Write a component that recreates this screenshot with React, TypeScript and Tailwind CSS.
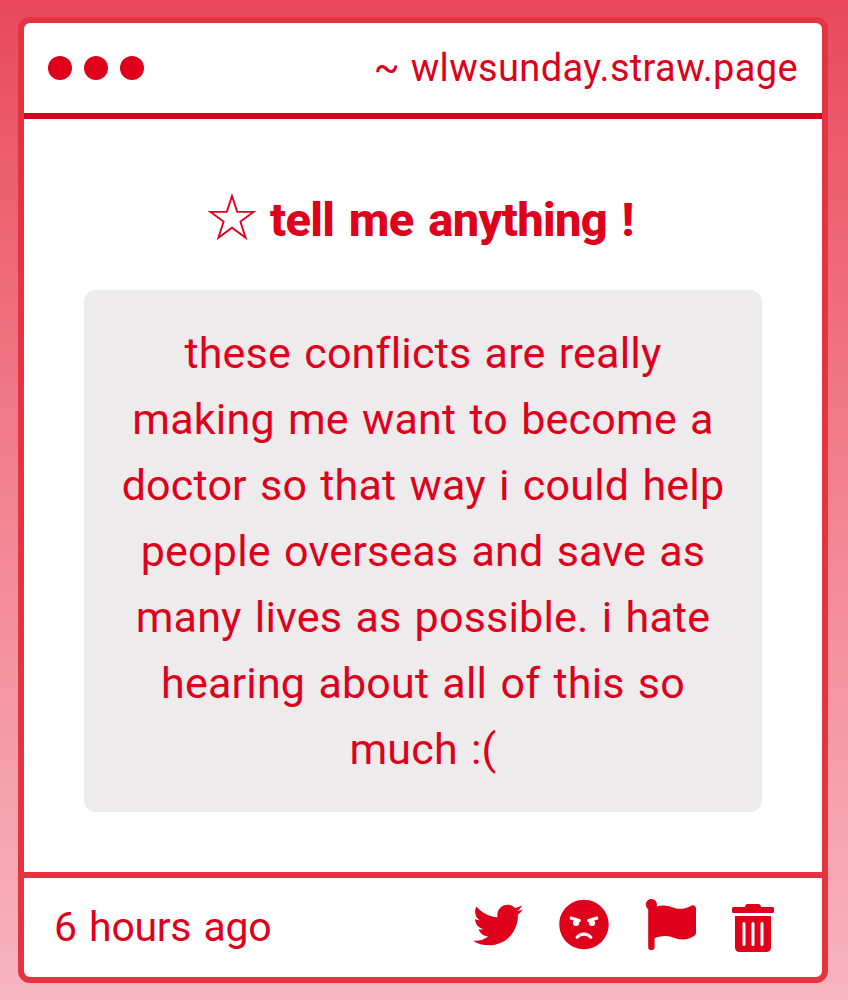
import React from 'react';
import { FaAngry, FaFlag, FaTrashAlt, FaTwitter } from 'react-icons/fa';

const messageLines = [
  'these conflicts are really',
  'making me want to become a',
  'doctor so that way i could help',
  'people overseas and save as',
  'many lives as possible. i hate',
  'hearing about all of this so',
  'much :(',
];

const App = () => {
  return (
    <div className="h-[1000px] w-[848px] bg-linear-to-b from-[#e8485e] to-[#f6b5c0] pt-[17px] pl-[18px] font-['Roboto',sans-serif] text-[#df001c]">
      <div className="flex h-[966px] w-[810px] flex-col overflow-hidden rounded-xl border-6 border-[#e4343f] bg-white">
        <div className="flex h-24 shrink-0 items-center justify-between border-b-6 border-[#d3061e] pr-6 pl-6">
          <div className="flex gap-3">
            <div className="size-6 rounded-full bg-[#df001c]" />
            <div className="size-6 rounded-full bg-[#df001c]" />
            <div className="size-6 rounded-full bg-[#df001c]" />
          </div>
          <p className="text-[38px] leading-none tracking-[0.35px] [word-spacing:1px] whitespace-nowrap">~ wlwsunday.straw.page</p>
        </div>

        <div className="flex-1 pt-[68px]">
          <div className="flex h-[66px] items-center pl-[183px]">
            <svg className="mb-[6px] h-[48px] w-[50px] shrink-0" viewBox="0 0 50 48" fill="none" stroke="currentColor" strokeWidth="1.9">
              <path d="M25 3L30.2 18.9H46.5L33.4 28.6L38.6 44.8L25 34.8L11.4 44.8L16.6 28.6L3.5 18.9H19.8Z" />
            </svg>
            <h1 className="mb-[2px] ml-[13px] text-[47px] leading-none font-extrabold tracking-[-0.65px] [word-spacing:3.5px] whitespace-nowrap">tell me anything !</h1>
          </div>

          <div className="mt-[37px] ml-[60px] h-[522px] w-[678px] rounded-xl bg-[#edebec] pt-[30px] text-center text-[43px] leading-[66px] tracking-[0.2px] [word-spacing:2.3px]">
            {messageLines.map((line) => (
              <p key={line} className="whitespace-nowrap">{line}</p>
            ))}
          </div>
        </div>

        <div className="flex h-[105px] shrink-0 items-start justify-between border-t-6 border-[#e4343f] pr-12 pl-[30px]">
          <p className="mt-[27px] text-[41px] leading-[44px] tracking-[-0.3px] [word-spacing:2.5px] whitespace-nowrap">6 hours ago</p>
          <div className="flex pt-[21px]">
            <FaTwitter className="mt-px size-[50px]" />
            <FaAngry className="ml-9 h-[51px] w-[50px]" />
            <FaFlag className="ml-9 h-[51px] w-[51px]" />
            <FaTrashAlt className="mt-[5px] ml-9 h-[48px] w-[42px]" />
          </div>
        </div>
      </div>
    </div>
  );
};

export default App;
